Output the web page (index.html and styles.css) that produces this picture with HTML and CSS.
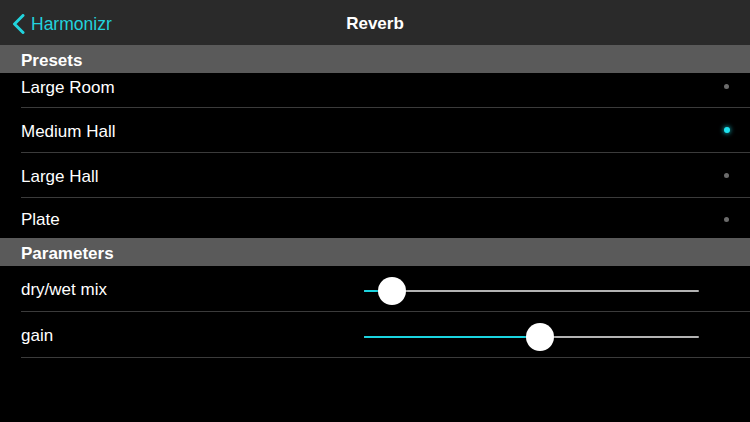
FILE: index.html
```html
<!DOCTYPE html>
<html>
<head>
<meta charset="utf-8">
<link rel="stylesheet" href="styles.css">
</head>
<body>
<div class="screen">
  <header class="nav">
    <div class="back">
      <svg class="chev" width="13" height="20" viewBox="0 0 13 20"><path d="M11 1.5 L2.5 10 L11 18.5" fill="none" stroke="#22d3dd" stroke-width="3" stroke-linecap="round" stroke-linejoin="round"/></svg>
      <span class="txt">Harmonizr</span>
    </div>
    <div class="title txt">Reverb</div>
    <div></div>
  </header>

  <div class="section"><span class="txt">Presets</span></div>
  <div class="row first"><span>Large Room</span><i class="dot"></i></div>
  <div class="row"><span class="txt">Medium Hall</span><i class="dot on"></i></div>
  <div class="row"><span class="txt">Large Hall</span><i class="dot"></i></div>
  <div class="row last"><span class="txt">Plate</span><i class="dot"></i></div>

  <div class="section"><span class="txt">Parameters</span></div>
  <div class="row param">
    <span class="txt">dry/wet mix</span>
    <div class="slider">
      <div class="track"><div class="fill" style="width:8.5%"></div></div>
      <div class="thumb" style="left:8.5%"></div>
    </div>
  </div>
  <div class="row param">
    <span class="txt">gain</span>
    <div class="slider">
      <div class="track"><div class="fill" style="width:52.5%"></div></div>
      <div class="thumb" style="left:52.5%"></div>
    </div>
  </div>
</div>
</body>
</html>
```

FILE: styles.css
```css
html, body {
  margin: 0;
  padding: 0;
  background: #000;
}
.screen {
  width: 750px;
  height: 422px;
  overflow: hidden;
  background: #000;
  color: #fff;
  font-family: "Liberation Sans", Arial, sans-serif;
  font-size: 17px;
}
.txt {
  padding-top: 3px;
}
.nav {
  height: 45px;
  background: #2a2a2a;
  display: grid;
  grid-template-columns: 1fr auto 1fr;
  align-items: center;
}
.back {
  display: flex;
  align-items: center;
  gap: 6px;
  padding-left: 12px;
  color: #22d3dd;
  font-size: 17.5px;
}
.chev {
  display: block;
  margin-top: 2px;
}
.title {
  font-weight: bold;
  font-size: 17px;
}
.section {
  height: 28px;
  background: #5a5a5a;
  display: flex;
  align-items: center;
  padding-left: 21px;
  font-weight: bold;
  font-size: 17px;
}
.row {
  margin-left: 21px;
  height: 44px;
  border-bottom: 1px solid #3b3b3b;
  display: flex;
  align-items: center;
  justify-content: space-between;
  padding-right: 21px;
  line-height: 20px;
}
.row.first {
  align-items: flex-start;
  padding-top: 5px;
  box-sizing: border-box;
  height: 35px;
}
.row.first .dot {
  margin-top: 6px;
}
.row.last {
  height: 40px;
  border-bottom: none;
}
.dot {
  display: block;
  width: 5px;
  height: 5px;
  border-radius: 50%;
  background: #6b6b6b;
}
.dot.on {
  width: 6px;
  height: 6px;
  margin-right: -0.5px;
  background: #1ee3f0;
  box-shadow: 0 0 4px 1px rgba(30, 220, 235, 0.55);
}
.row.last .dot {
  margin-top: 3px;
}
.row.param {
  height: 45px;
  padding-right: 51px;
  justify-content: flex-start;
}
.row.param span {
  width: 343px;
  flex: none;
}
.slider {
  position: relative;
  width: 335px;
  height: 28px;
  margin-top: 4px;
}
.track {
  position: absolute;
  left: 0;
  right: 0;
  top: 13px;
  height: 2px;
  background: #b3b3b3;
  border-radius: 1px;
}
.fill {
  height: 100%;
  background: #1ad4e0;
  border-radius: 1px;
}
.thumb {
  position: absolute;
  top: 0;
  width: 28px;
  height: 28px;
  margin-left: -14px;
  border-radius: 50%;
  background: #fff;
  box-shadow: 0 1px 3px rgba(0, 0, 0, 0.4);
}
```
